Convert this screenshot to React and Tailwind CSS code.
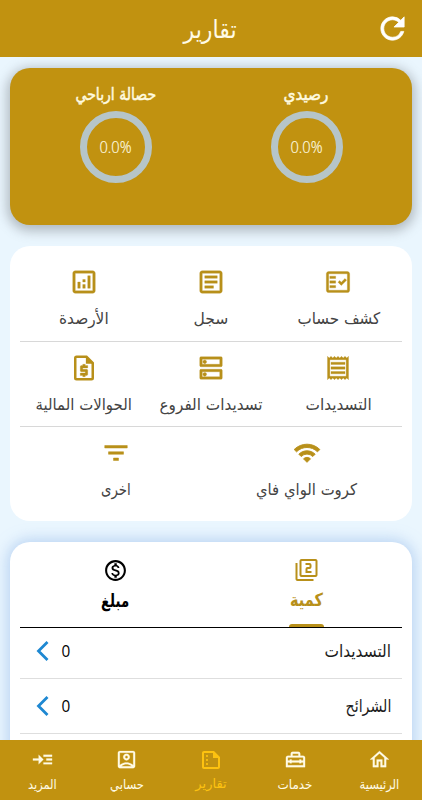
import { useLayoutEffect, useRef, useState } from "react";
import {
  MdRefresh,
  MdOutlineFactCheck,
  MdOutlineArticle,
  MdOutlineAnalytics,
  MdOutlineReceipt,
  MdOutlineDns,
  MdFilterList,
  MdWifi,
  MdOutlineFilter2,
  MdOutlineMonetizationOn,
  MdOutlineHome,
  MdOutlineHomeRepairService,
  MdOutlineSummarize,
  MdOutlineAccountBox,
  MdReadMore,
} from "react-icons/md";

// Condenses or stretches a label horizontally so that it takes `width` pixels.
function Label({ width, className = "", children }) {
  const ref = useRef(null);
  const [scale, setScale] = useState(1);
  useLayoutEffect(() => {
    if (ref.current.offsetWidth) setScale(width / ref.current.offsetWidth);
  }, [width]);
  return (
    <span className={`flex justify-center ${className}`} style={{ width }}>
      <span
        ref={ref}
        className="shrink-0 whitespace-nowrap"
        style={{ transform: `scaleX(${scale})` }}
      >
        {children}
      </span>
    </span>
  );
}

// Sheet with a folded corner and a dollar sign.
function DollarPage({ size, strokeWidth }) {
  return (
    <svg width={size} height={size} viewBox="0 0 24 24" fill="none" stroke="currentColor">
      <path d="M14 3H6a1 1 0 0 0-1 1v16a1 1 0 0 0 1 1h12a1 1 0 0 0 1-1V8z" strokeWidth="2" />
      <path d="M13.500 2.500V8.500H19.500z" fill="currentColor" stroke="none" />
      <path
        d="M15 11h-1v-1h-2v1h-1c-.55 0-1 .45-1 1v3c0 .55.45 1 1 1h3v1H10v2h2v1h2v-1h1c.55 0 1-.45 1-1v-3c0-.55-.45-1-1-1h-3v-1h4v-2z"
        transform="translate(-1 -1)"
        fill="currentColor"
        strokeWidth={strokeWidth}
      />
    </svg>
  );
}

function Gauge({ title, width }) {
  return (
    <div className="flex flex-1 flex-col items-center pt-[14px] text-[#fffbe0]">
      <Label
        width={width}
        className="h-[29px] text-[17px] leading-6 [-webkit-text-stroke:0.5px_#fffbe0]"
      >
        {title}
      </Label>
      <div className="flex h-[72px] w-[72px] items-center justify-center rounded-full border-[7px] border-[#b6c5c8]">
        <Label
          width={32}
          className="font-['Open_Sans'] text-base leading-6 font-light [-webkit-text-stroke:0.2px_#fffbe0]"
        >
          <bdi dir="ltr">0.0%</bdi>
        </Label>
      </div>
    </div>
  );
}

function Report({ icon: Icon, title, width, size = 27, weight = 0.25 }) {
  return (
    <div className="flex flex-1 flex-col items-center">
      <div className="flex h-7 items-center text-[#b8901a]">
        <Icon size={size} strokeWidth={weight} className="[&>path[fill=none]:first-child]:hidden" />
      </div>
      <Label width={width} className="mt-[11px] text-base leading-6 text-[#444444]">
        {title}
      </Label>
    </div>
  );
}

function Row({ title, width }) {
  return (
    <div className="flex h-[55px] items-center justify-between border-b border-[#dedede] px-[11px]">
      <Label width={width} className="text-[17px] leading-6 text-[#1c1c1c]">
        {title}
      </Label>
      <div className="flex items-center gap-[12px] pl-[5px]">
        <Label width={9} className="font-['Open_Sans'] text-[17px] leading-6">
          0
        </Label>
        <svg width="13" height="20" viewBox="0 0 13 20" fill="none">
          <path d="M11.500 1L2.500 10l9 9" stroke="#1e88d2" strokeWidth="2.800" />
        </svg>
      </div>
    </div>
  );
}

function NavItem({ icon: Icon, title, width, active }) {
  return (
    <div
      className={`flex flex-1 flex-col items-center pt-2 ${active ? "text-[#fdc210]" : "text-[#fffbe6]"}`}
    >
      <Icon
        size={active ? 24 : 23}
        strokeWidth={active ? 0 : 0.2}
        className="[&>path[fill=none]]:hidden"
      />
      <Label
        width={width}
        className={
          active ? "mt-[2px] text-[13px] leading-5" : "mt-[4px] text-[13px] leading-5"
        }
      >
        {title}
      </Label>
    </div>
  );
}

export default function App() {
  return (
    <div
      dir="rtl"
      className="flex h-[800px] w-full flex-col overflow-hidden bg-[#eaf6fe] font-['DejaVu_Sans',sans-serif]"
    >
      <header className="flex h-[57px] shrink-0 items-center bg-[#c19210] px-[12px] text-[#fffbe6]">
        <MdRefresh
          size={35}
          strokeWidth={0.5}
          className="text-white [&>path[fill=none]]:hidden"
        />
        <div className="flex flex-1 justify-center pt-[2px] pr-[2px]">
          <Label width={53} className="text-[25px] leading-8">
            تقارير
          </Label>
        </div>
        <div className="w-[35px]" />
      </header>

      <main className="flex min-h-0 flex-1 flex-col gap-[21px] px-[10px] pt-[11px]">
        <section className="flex h-[157px] shrink-0 rounded-[20px] bg-[#c19210] px-[10px] shadow-[0_3px_12px_3px_rgba(90,95,100,0.4)]">
          <Gauge title="رصيدي" width={45} />
          <Gauge title="حصالة ارباحي" width={81} />
        </section>

        <section className="h-[275px] shrink-0 rounded-[20px] bg-white px-[10px]">
          <div className="flex h-[96px] border-b border-[#d8d8d8] pt-[22px]">
            <Report icon={MdOutlineFactCheck} title="كشف حساب" width={83} size={28} />
            <Report icon={MdOutlineArticle} title="سجل" width={35} size={30} />
            <Report icon={MdOutlineAnalytics} title="الأرصدة" width={50} size={30} />
          </div>
          <div className="flex h-[85px] border-b border-[#d8d8d8] pt-[12px]">
            <Report icon={MdOutlineReceipt} title="التسديدات" width={66} size={28} />
            <Report icon={MdOutlineDns} title="تسديدات الفروع" width={103} size={30} />
            <Report icon={DollarPage} title="الحوالات المالية" width={96} size={30} weight={0.2} />
          </div>
          <div className="flex pt-[12px]">
            <Report icon={MdWifi} title="كروت الواي فاي" width={101} size={28} weight={0.8} />
            <Report icon={MdFilterList} title="اخرى" width={30} size={30} weight={0.4} />
          </div>
        </section>

        <section className="h-[240px] shrink-0 rounded-t-[20px] bg-white px-[10px] shadow-[0_0_14px_3px_rgba(150,185,235,0.55)]">
          <div className="flex h-[86px] border-b border-black pt-4">
            <div className="flex flex-1 flex-col items-center text-[#b8901a]">
              <MdOutlineFilter2 size={25} />
              <Label width={33} className="mt-[6px] text-[18px] leading-6 font-bold">
                كمية
              </Label>
              <div className="mt-[12px] h-[3px] w-[35px] shrink-0 rounded-t-[3px] bg-[#b8901a]" />
            </div>
            <div className="flex flex-1 flex-col items-center text-black">
              <MdOutlineMonetizationOn size={25} />
              <Label width={28} className="mt-[6px] text-[18px] leading-6 font-bold">
                مبلغ
              </Label>
            </div>
          </div>
          <div className="-mt-[4px]" />
          <Row title="التسديدات" width={67} />
          <Row title="الشرائح" width={46} />
        </section>
      </main>

      <nav className="z-10 flex h-[60px] shrink-0 bg-[#c19210]">
        <NavItem icon={MdOutlineHome} title="الرئيسية" width={40} />
        <NavItem icon={MdOutlineHomeRepairService} title="خدمات" width={35} />
        <NavItem icon={MdOutlineSummarize} title="تقارير" width={31} active />
        <NavItem icon={MdOutlineAccountBox} title="حسابي" width={34} />
        <NavItem icon={MdReadMore} title="المزيد" width={29} />
      </nav>
    </div>
  );
}
